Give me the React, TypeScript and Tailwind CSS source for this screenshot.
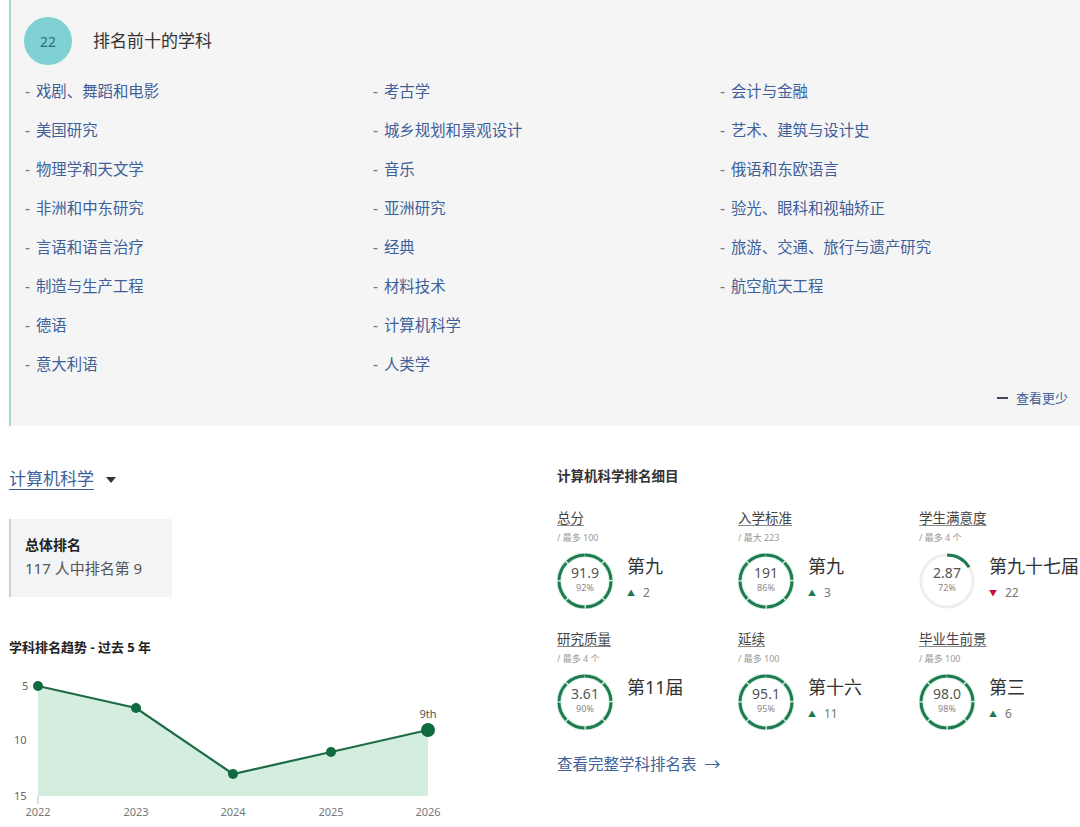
import React from 'react';

const topList: string[][] = [
  ['戏剧、舞蹈和电影', '美国研究', '物理学和天文学', '非洲和中东研究', '言语和语言治疗', '制造与生产工程', '德语', '意大利语'],
  ['考古学', '城乡规划和景观设计', '音乐', '亚洲研究', '经典', '材料技术', '计算机科学', '人类学'],
  ['会计与金融', '艺术、建筑与设计史', '俄语和东欧语言', '验光、眼科和视轴矫正', '旅游、交通、旅行与遗产研究', '航空航天工程'],
];

type Metric = {
  label: string;
  sub: string;
  value: string;
  pct: string;
  rank: string;
  change?: { dir: 'up' | 'down'; n: number };
  partial?: boolean;
};

const metrics: Metric[] = [
  { label: '总分', sub: '/ 最多 100', value: '91.9', pct: '92%', rank: '第九', change: { dir: 'up', n: 2 } },
  { label: '入学标准', sub: '/ 最大 223', value: '191', pct: '86%', rank: '第九', change: { dir: 'up', n: 3 } },
  { label: '学生满意度', sub: '/ 最多 4 个', value: '2.87', pct: '72%', rank: '第九十七届', change: { dir: 'down', n: 22 }, partial: true },
  { label: '研究质量', sub: '/ 最多 4 个', value: '3.61', pct: '90%', rank: '第11届' },
  { label: '延续', sub: '/ 最多 100', value: '95.1', pct: '95%', rank: '第十六', change: { dir: 'up', n: 11 } },
  { label: '毕业生前景', sub: '/ 最多 100', value: '98.0', pct: '98%', rank: '第三', change: { dir: 'up', n: 6 } },
];

function Ring({ value, pct, partial }: { value: string; pct: string; partial?: boolean }) {
  const r = 26;
  const c = 2 * Math.PI * r;
  const seg = c / 8;
  return (
    <div className="relative w-[56px] h-[56px] shrink-0">
      <svg width="56" height="56" viewBox="0 0 56 56" className="absolute inset-0">
        {partial ? (
          <>
            <circle cx="28" cy="28" r={r} fill="none" stroke="#eeeeee" strokeWidth="3" />
            <circle
              cx="28"
              cy="28"
              r={r}
              fill="none"
              stroke="#1f7a4f"
              strokeWidth="3"
              strokeDasharray={`${c * 0.16} ${c}`}
              transform="rotate(-90 28 28)"
            />
          </>
        ) : (
          <>
            <circle cx="28" cy="28" r={r} fill="none" stroke="#d5f1e3" strokeWidth="5" />
            <circle
              cx="28"
              cy="28"
              r={r}
              fill="none"
              stroke="#1f7a4f"
              strokeWidth="3"
              strokeDasharray={`${seg - 1.4} 1.4`}
              transform="rotate(-90 28 28)"
            />
          </>
        )}
      </svg>
      <div className="absolute inset-0 flex flex-col items-center justify-center">
        <span className="text-[14px] leading-[16px] text-[#555] mt-[-3px]">{value}</span>
        <span className="text-[9px] leading-[12px] text-[#888] mt-[1px]">{pct}</span>
      </div>
    </div>
  );
}

function MetricCell({ m }: { m: Metric }) {
  return (
    <div className="flex flex-col">
      <span className="text-[13.5px] leading-[20px] text-[#444] underline underline-offset-2 decoration-[#888]">
        {m.label}
      </span>
      <span className="text-[9px] leading-[14px] text-[#999] mt-[3px]">{m.sub}</span>
      <div className="flex mt-[8px]">
        <Ring value={m.value} pct={m.pct} partial={m.partial} />
        <div className="flex flex-col ml-[14px] pt-[1px]">
          <span className="text-[18px] leading-[24px] text-[#333]">{m.rank}</span>
          {m.change && (
            <span className="flex items-center text-[12px] leading-[16px] text-[#777] mt-[7px]">
              {m.change.dir === 'up' ? (
                <span className="text-[8px] text-[#1f7a4f] mr-[8px]">▲</span>
              ) : (
                <span className="text-[8px] text-[#c8102e] mr-[8px]">▼</span>
              )}
              {m.change.n}
            </span>
          )}
        </div>
      </div>
    </div>
  );
}

function TrendChart() {
  const pts = [
    [38, 18],
    [136, 40],
    [233, 106],
    [331, 84],
    [428, 62],
  ];
  const years = ['2022', '2023', '2024', '2025', '2026'];
  const line = pts.map((p) => p.join(',')).join(' ');
  const area = `38,128 ${line} 428,128`;
  return (
    <svg width="460" height="159" viewBox="0 0 460 159" className="block">
      <polygon points={area} fill="#d3eedf" />
      <polyline points={line} fill="none" stroke="#1e6b45" strokeWidth="2.2" />
      {pts.map((p, i) => (
        <circle key={i} cx={p[0]} cy={p[1]} r={i === 4 ? 7 : 5} fill="#0f6b3f" />
      ))}
      <line x1="38" y1="128" x2="38" y2="136" stroke="#bbb" strokeWidth="1" />
      <text x="428" y="50" textAnchor="middle" fontSize="11" fill="#555">9th</text>
      <text x="22" y="22" textAnchor="start" fontSize="11" fill="#666">5</text>
      <text x="14" y="76" textAnchor="start" fontSize="11" fill="#666">10</text>
      <text x="14" y="132" textAnchor="start" fontSize="11" fill="#666">15</text>
      {years.map((y, i) => (
        <text key={y} x={pts[i][0]} y="148" textAnchor="middle" fontSize="11" fill="#777">
          {y}
        </text>
      ))}
    </svg>
  );
}

export default function App() {
  return (
    <div
      className="w-[1080px] h-[827px] overflow-hidden bg-white"
      style={{ fontFamily: '"Noto Sans", "Noto Sans CJK SC", sans-serif' }}
    >
      {/* Top subjects panel */}
      <div className="ml-[9px] h-[426px] border-l-2 border-[#a6d6d4] bg-[#f5f5f6] flex flex-col">
        <div className="flex items-center pl-[13px] pt-[17px]">
          <div className="w-[48px] h-[48px] rounded-full bg-[#7fd1d3] flex items-center justify-center text-[14px] text-[#2f6d78]">
            22
          </div>
          <span className="ml-[21px] text-[17px] text-[#333]">排名前十的学科</span>
        </div>
        <div className="grid grid-cols-[348px_347px_1fr] pl-[14px] mt-[7px]">
          {topList.map((col, ci) => (
            <div key={ci} className="flex flex-col">
              {col.map((item) => (
                <span key={item} className="text-[15.4px] leading-[39px] text-[#3f5f98]">
                  <span className="text-[#777] mr-[2px]">- </span>
                  {item}
                </span>
              ))}
            </div>
          ))}
        </div>
        <div className="flex justify-end items-center pr-[12px] mt-[4px] text-[13px] leading-[20px] text-[#3f5f98]">
          <span className="w-[11px] h-[2px] bg-[#445] mr-[8px]" />
          查看更少
        </div>
      </div>

      {/* Bottom section */}
      <div className="flex">
        <div className="w-[548px] flex flex-col">
          <div className="flex items-center ml-[9px] mt-[41px] h-[24px]">
            <span className="text-[17px] text-[#3b5f9b] underline underline-offset-4 decoration-[#3b5f9b]">
              计算机科学
            </span>
            <svg width="10" height="6" viewBox="0 0 10 6" className="ml-[12px] mt-[2px]">
              <polygon points="0,0 10,0 5,6" fill="#333" />
            </svg>
          </div>
          <div className="ml-[9px] mt-[28px] w-[163px] h-[78px] bg-[#f3f4f6] border-l-2 border-[#ccd1d6] pl-[14px] pt-[15px]">
            <div className="text-[14px] leading-[22px] font-bold text-[#222]">总体排名</div>
            <div className="text-[15px] leading-[24px] text-[#555]">117 人中排名第 9</div>
          </div>
          <div className="ml-[9px] mt-[41px] text-[13px] leading-[18px] font-bold text-[#222]">
            学科排名趋势 - 过去 5 年
          </div>
          <div className="mt-[12px]">
            <TrendChart />
          </div>
        </div>

        <div className="flex flex-col pl-[9px]">
          <div className="mt-[41px] text-[13.5px] leading-[18px] font-bold text-[#333]">计算机科学排名细目</div>
          <div className="grid grid-cols-[181px_181px_161px] gap-y-[20px] mt-[23px]">
            {metrics.map((m) => (
              <MetricCell key={m.label} m={m} />
            ))}
          </div>
          <div className="mt-[23px] flex items-center text-[15.5px] leading-[22px] text-[#3f5f98]">
            查看完整学科排名表
            <span className="ml-[8px] text-[16px]">→</span>
          </div>
        </div>
      </div>
    </div>
  );
}
